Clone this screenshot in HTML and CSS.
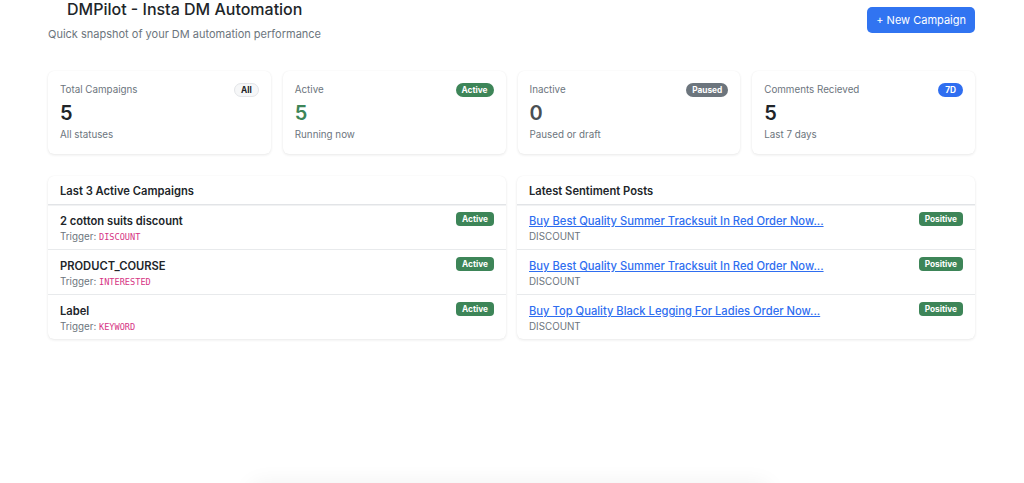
FILE: index.html
```html
<!DOCTYPE html>
<html lang="en">
<head>
<meta charset="utf-8">
<title>DMPilot - Insta DM Automation</title>
<link rel="stylesheet" href="styles.css">
</head>
<body>
<div class="page">
  <header class="top">
    <div class="heading">
      <h1 class="title">DMPilot - Insta DM Automation</h1>
      <p class="subtitle">Quick snapshot of your DM automation performance</p>
    </div>
    <button class="btn-primary">+ New Campaign</button>
  </header>

  <section class="stats">
    <div class="stat">
      <div class="stat-head"><span class="stat-label">Total Campaigns</span><span class="pill pill-light">All</span></div>
      <div class="stat-num">5</div>
      <div class="stat-sub">All statuses</div>
    </div>
    <div class="stat">
      <div class="stat-head"><span class="stat-label">Active</span><span class="pill pill-green">Active</span></div>
      <div class="stat-num num-green">5</div>
      <div class="stat-sub">Running now</div>
    </div>
    <div class="stat">
      <div class="stat-head"><span class="stat-label">Inactive</span><span class="pill pill-gray">Paused</span></div>
      <div class="stat-num num-gray">0</div>
      <div class="stat-sub">Paused or draft</div>
    </div>
    <div class="stat">
      <div class="stat-head"><span class="stat-label">Comments Recieved</span><span class="pill pill-blue">7D</span></div>
      <div class="stat-num">5</div>
      <div class="stat-sub">Last 7 days</div>
    </div>
  </section>

  <section class="panels">
    <div class="panel">
      <div class="panel-head">Last 3 Active Campaigns</div>
      <div class="row">
        <div class="row-main">
          <div class="row-title">2 cotton suits discount</div>
          <div class="row-meta">Trigger: <code class="kw">DISCOUNT</code></div>
        </div>
        <span class="tag">Active</span>
      </div>
      <div class="row">
        <div class="row-main">
          <div class="row-title">PRODUCT_COURSE</div>
          <div class="row-meta">Trigger: <code class="kw">INTERESTED</code></div>
        </div>
        <span class="tag">Active</span>
      </div>
      <div class="row">
        <div class="row-main">
          <div class="row-title">Label</div>
          <div class="row-meta">Trigger: <code class="kw">KEYWORD</code></div>
        </div>
        <span class="tag">Active</span>
      </div>
    </div>

    <div class="panel">
      <div class="panel-head">Latest Sentiment Posts</div>
      <div class="row">
        <div class="row-main">
          <a class="row-link" href="#">Buy Best Quality Summer Tracksuit In Red Order Now...</a>
          <div class="row-meta">DISCOUNT</div>
        </div>
        <span class="tag">Positive</span>
      </div>
      <div class="row">
        <div class="row-main">
          <a class="row-link" href="#">Buy Best Quality Summer Tracksuit In Red Order Now...</a>
          <div class="row-meta">DISCOUNT</div>
        </div>
        <span class="tag">Positive</span>
      </div>
      <div class="row">
        <div class="row-main">
          <a class="row-link" href="#">Buy Top Quality Black Legging For Ladies Order Now...</a>
          <div class="row-meta">DISCOUNT</div>
        </div>
        <span class="tag">Positive</span>
      </div>
    </div>
  </section>

  <div class="below"></div>
</div>
</body>
</html>
```

FILE: styles.css
```css
* { box-sizing: border-box; }
html, body { margin: 0; padding: 0; background: #fff; }
body {
  font-family: Inter, "Noto Sans", "Liberation Sans", sans-serif;
  color: #212529;
  overflow: hidden;
}
.page {
  padding: 0 49px 0 48px;
}
.top {
  display: flex;
  justify-content: space-between;
  align-items: flex-start;
}
.title {
  margin: 0;
  padding-left: 19px;
  font-size: 16px;
  font-weight: 500;
  line-height: 19px;
  color: #212529;
}
.subtitle {
  margin: 7px 0 0;
  font-size: 11px;
  line-height: 16px;
  color: #6c757d;
}
.btn-primary {
  margin-top: 7px;
  height: 26px;
  padding: 0 9px;
  border: none;
  border-radius: 5px;
  background: #3174f1;
  color: #fff;
  font-family: inherit;
  font-size: 11px;
  line-height: 26px;
}
.stats {
  margin-top: 29px;
  display: grid;
  grid-template-columns: repeat(4, 1fr);
  gap: 12px;
}
.stat {
  background: #fff;
  border-radius: 6px;
  box-shadow: 0 1px 3px rgba(0,0,0,0.09), 0 0 1px rgba(0,0,0,0.05);
  padding: 11px 12px 11px;
}
.stat-head {
  display: flex;
  justify-content: space-between;
  align-items: center;
  height: 15px;
}
.stat-label {
  font-size: 9.8px;
  color: #6c757d;
}
.pill {
  font-size: 8.3px;
  font-weight: 700;
  line-height: 10px;
  padding: 2px 6px;
  border-radius: 8px;
  color: #fff;
}
.pill-light { background: #f6f7f8; color: #212529; border: 1px solid #e3e5e8; padding: 1px 6px; }
.pill-green { background: #3d8558; }
.pill-gray { background: #6c757d; }
.pill-blue { background: #2f6ef0; padding: 2px 7px; }
.stat-num {
  margin-top: 4px;
  font-size: 20px;
  font-weight: 600;
  line-height: 24px;
}
.num-green { color: #3d8558; }
.num-gray { color: #4a4f54; }
.stat-sub {
  margin-top: 2px;
  font-size: 9.8px;
  line-height: 16px;
  color: #6c757d;
}
.panels {
  margin-top: 22px;
  display: grid;
  grid-template-columns: 1fr 1fr;
  gap: 11px;
}
.panel {
  background: #fff;
  border-radius: 6px;
  box-shadow: 0 1px 3px rgba(0,0,0,0.09), 0 0 1px rgba(0,0,0,0.05);
  overflow: hidden;
}
.panel-head {
  padding: 8px 12px 5px;
  font-size: 11.2px;
  font-weight: 600;
  line-height: 15px;
  border-bottom: 1px solid #e2e4e7;
  box-shadow: 0 1px 0 #f1f2f3;
}
.row {
  display: flex;
  justify-content: space-between;
  align-items: flex-start;
  padding: 7px 12px 5px;
  border-bottom: 1px solid #e8eaec;
  height: 45px;
}
.row:last-child { border-bottom: none; height: 44px; }
.row-main { display: flex; flex-direction: column; }
.row-title {
  margin-top: 1px;
  font-size: 11.2px;
  font-weight: 600;
  line-height: 16px;
}
.row-meta {
  font-size: 9.8px;
  line-height: 16px;
  color: #6c757d;
}
.kw {
  font-family: "DejaVu Sans Mono", "Liberation Mono", monospace;
  font-size: 8.6px;
  color: #d63384;
}
.row-link {
  margin-top: 1px;
  font-size: 11.2px;
  font-weight: 500;
  line-height: 16px;
  color: #2f6ef0;
  text-decoration: underline;
}
.tag {
  background: #3d8558;
  color: #fff;
  font-size: 8.3px;
  font-weight: 700;
  line-height: 10px;
  padding: 2px 6px;
  border-radius: 4px;
}
.below {
  width: 520px;
  height: 40px;
  margin: 148px 0 0 202px;
  border-radius: 10px;
  box-shadow: 0 -4px 22px rgba(0,0,0,0.06);
}
```
